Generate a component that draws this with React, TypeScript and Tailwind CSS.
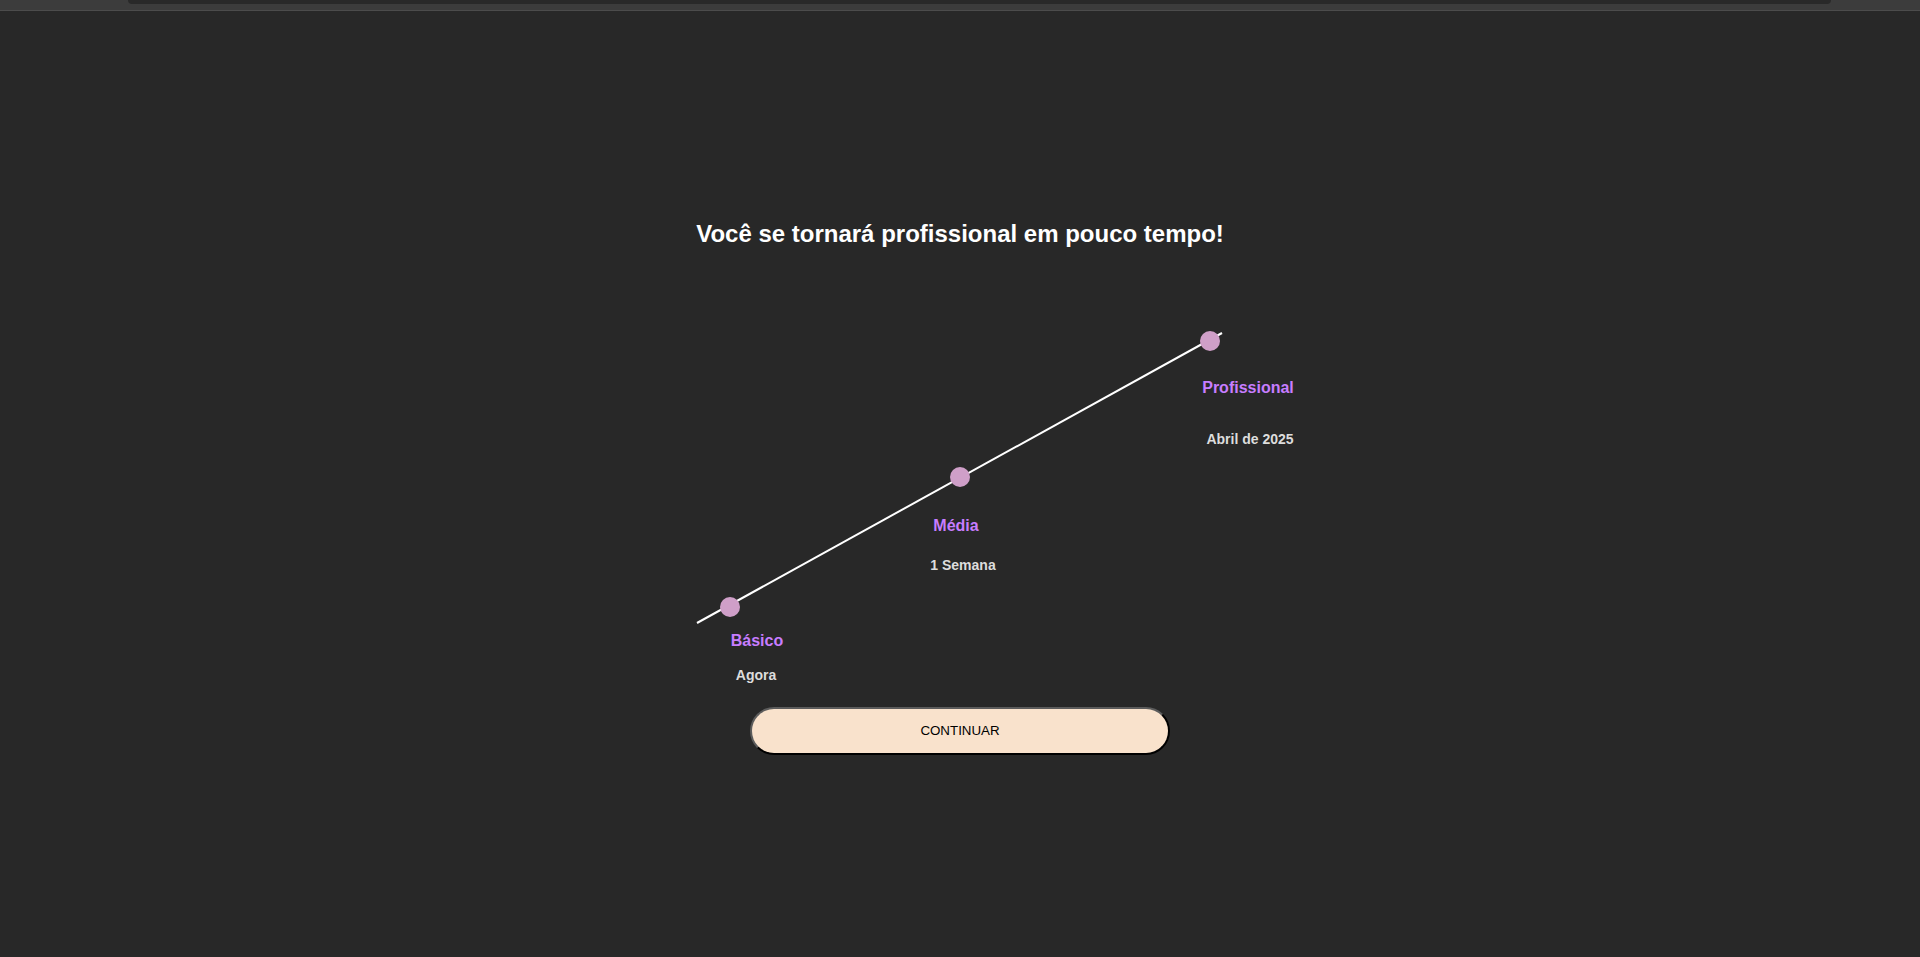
import React from "react";

type Step = {
  dot: [number, number];
  title: string;
  sub: string;
  titleLeft: number;
  titleTop: number;
  subLeft: number;
  subTop: number;
};

// positions are relative to the 600x370 chart box
const steps: Step[] = [
  { dot: [70, 287], title: "Básico", sub: "Agora", titleLeft: 97, titleTop: 311, subLeft: 96, subTop: 346 },
  { dot: [300, 157], title: "Média", sub: "1 Semana", titleLeft: 296, titleTop: 196, subLeft: 303, subTop: 236 },
  { dot: [550, 21], title: "Profissional", sub: "Abril de 2025", titleLeft: 588, titleTop: 58, subLeft: 590, subTop: 110 },
];

export default function App() {
  return (
    <div className="min-h-screen bg-[#282828] font-['Liberation_Sans',Arial,sans-serif]">
      <div className="h-[11px] bg-[#3c3c3c] border-b border-[#4c4c4c]">
        <div className="ml-[128px] mr-[89px] h-[4px] bg-[#292929] rounded-b-[10px]" />
      </div>

      <div className="flex flex-col items-center">
        <h1 className="mt-[207px] text-[24px] leading-[32px] font-bold text-white">
          Você se tornará profissional em pouco tempo!
        </h1>

        <div className="relative mt-[70px] w-[600px] h-[370px]">
          <svg className="absolute inset-0" width="600" height="370" viewBox="0 0 600 370">
            <line x1="37" y1="303" x2="562" y2="13" stroke="white" strokeWidth="2" />
            {steps.map((s) => (
              <circle key={s.title} cx={s.dot[0]} cy={s.dot[1]} r="10" fill="#cf9fc8" />
            ))}
          </svg>
          {steps.map((s) => (
            <React.Fragment key={s.title}>
              <div
                className="absolute w-[140px] text-center text-[16px] leading-[20px] font-bold text-[#c77dff]"
                style={{ left: s.titleLeft - 70, top: s.titleTop }}
              >
                {s.title}
              </div>
              <div
                className="absolute w-[140px] text-center text-[14px] leading-[18px] font-bold text-[#dddddd]"
                style={{ left: s.subLeft - 70, top: s.subTop }}
              >
                {s.sub}
              </div>
            </React.Fragment>
          ))}
        </div>

        <button className="mt-[17px] w-[420px] h-[48px] rounded-full bg-[#f9e2cc] border-2 border-t-[#5c5c5c] border-l-[#5c5c5c] border-r-black border-b-black text-[13.33px] text-black">
          CONTINUAR
        </button>
      </div>
    </div>
  );
}
